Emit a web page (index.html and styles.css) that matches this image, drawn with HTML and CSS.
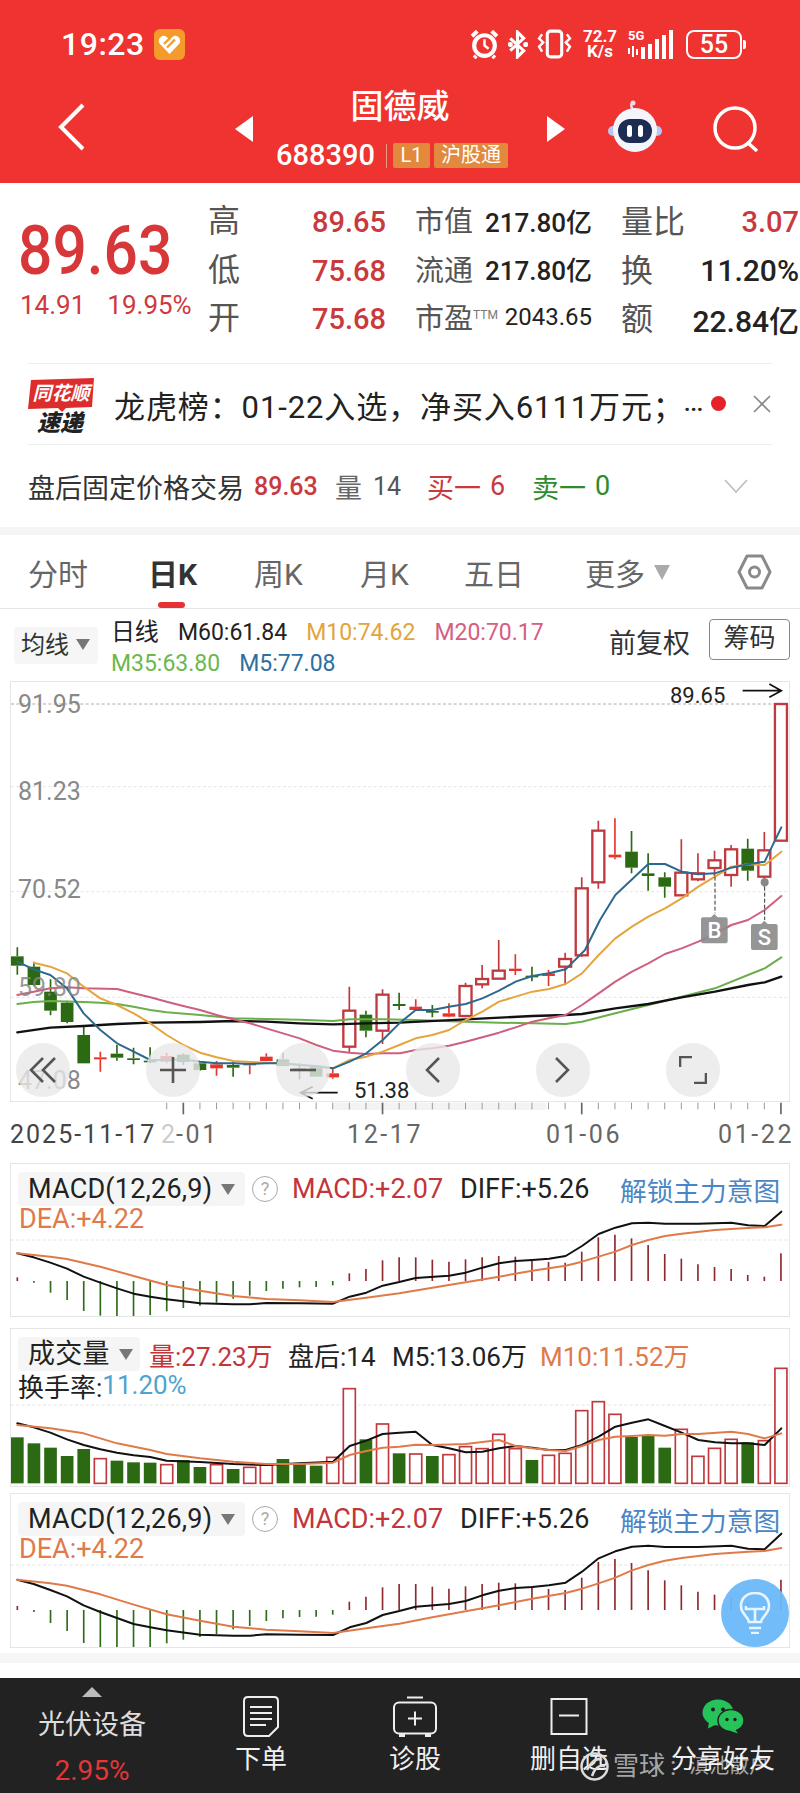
FILE: index.html
```html
<!DOCTYPE html>
<html lang="zh-CN">
<head>
    <meta charset="UTF-8">
    <meta name="viewport" content="width=device-width, initial-scale=1.0">
    <title>固德威 688390</title>
    <link rel="stylesheet" href="styles.css">
</head>
<body>
    <header class="top">
        <!-- status bar -->
        <div class="status">
            <span class="clock">19:23</span>
            <svg class="heart-app" viewBox="0 0 31 31">
                <rect width="31" height="31" rx="6" fill="#f59b2b"/>
                <path d="M15.5 25 L5.5 14.5 C3 10 8 5 12 7.5 L15.5 10.5 L19 7.5 C23 5 28 10 25.5 14.5 Z" fill="#fff"/>
                <path d="M10 15 L16 9 M13 18.5 L21 10.5" stroke="#f59b2b" stroke-width="2.4"/>
            </svg>
            <div class="status-right">
                <svg width="29" height="30" viewBox="0 0 28 29" fill="none" stroke="#fff">
                    <circle cx="14" cy="16" r="10" stroke-width="4"/>
                    <path d="M14 10 V16 L18 19" stroke-width="2.4"/>
                    <path d="M2 7 L7 2 M26 7 L21 2 M6 26 L4 28 M22 26 L24 28" stroke-width="3.8"/>
                </svg>
                <svg width="20" height="29" viewBox="0 0 19 28" fill="none" stroke="#fff" stroke-width="3">
                    <path d="M2 8 L15 20 L9 26 V2 L15 8 L2 20"/>
                    <circle cx="2" cy="14" r="1" fill="#fff"/><circle cx="17" cy="14" r="1" fill="#fff"/>
                </svg>
                <svg width="35" height="30" viewBox="0 0 34 29" fill="none" stroke="#fff" stroke-width="3">
                    <rect x="10" y="2" width="14" height="25" rx="3"/>
                    <path d="M5 5 L2 9 L6 13 L2 17 L5 22 M29 5 L32 9 L28 13 L32 17 L29 22" stroke-width="2.4"/>
                </svg>
                <span class="speed">72.7<br>K/s</span>
                <div class="signal">
                    <span class="five-g">5G</span>
                    <svg width="46" height="29" viewBox="0 0 46 29" fill="#fff">
                        <rect x="0" y="18" width="2" height="6"/><rect x="4" y="16" width="2" height="11"/>
                        <rect x="8" y="19" width="2" height="6"/><rect x="13" y="17" width="4" height="12"/>
                        <rect x="20" y="14" width="4" height="15"/><rect x="27" y="9" width="4" height="20"/>
                        <rect x="34" y="5" width="4" height="24"/><rect x="41" y="0" width="4" height="29"/>
                    </svg>
                </div>
                <div class="battery"><span>55</span></div>
            </div>
        </div>

        <!-- stock nav -->
        <nav class="nav">
            <svg class="back" width="27" height="48" viewBox="0 0 27 48" fill="none" stroke="#fff" stroke-width="4">
                <path d="M25 2 L3 24 L25 46"/>
            </svg>
            <span class="tri tri-left"></span>
            <div class="stock">
                <div class="stock-name">固德威</div>
                <div class="stock-code">
                    <span>688390</span>
                    <i class="sep"></i>
                    <b class="tag tag-l1">L1</b>
                    <b class="tag">沪股通</b>
                </div>
            </div>
            <span class="tri tri-right"></span>
            <svg class="robot" width="56" height="52" viewBox="0 0 56 52">
                <path d="M26 10 Q22 4 27 2" stroke="#e9e6f5" stroke-width="2.5" fill="none"/>
                <circle cx="26" cy="3" r="2.5" fill="#f2d9e0"/>
                <circle cx="6" cy="31" r="5" fill="#b6c8f2"/><circle cx="50" cy="31" r="5" fill="#b6c8f2"/>
                <circle cx="28" cy="30" r="22" fill="#f4f5fb"/>
                <rect x="11" y="19" width="34" height="24" rx="12" fill="#1c2c52"/>
                <rect x="20" y="25" width="5" height="12" rx="2.5" fill="#fff"/>
                <rect x="31" y="25" width="5" height="12" rx="2.5" fill="#fff"/>
            </svg>
            <svg class="search" width="47" height="46" viewBox="0 0 47 46" fill="none" stroke="#fff" stroke-width="3.5">
                <circle cx="22" cy="22" r="20"/>
                <path d="M34 36 L44 45"/>
            </svg>
        </nav>
    </header>

    <!-- quote -->
    <section class="quote">
        <div class="price-box">
            <div class="price">89.63</div>
            <div class="change"><span>14.91</span><span>19.95%</span></div>
        </div>
        <div class="quote-grid">
            <span class="q-label big">高</span><span class="q-num red">89.65</span>
            <div class="q-pair"><span class="q-label">市值</span><span class="q-val">217.80亿</span></div>
            <div class="q-pair wide"><span class="q-label">量比</span><span class="q-num red">3.07</span></div>

            <span class="q-label big">低</span><span class="q-num red">75.68</span>
            <div class="q-pair"><span class="q-label">流通</span><span class="q-val">217.80亿</span></div>
            <div class="q-pair wide"><span class="q-label">换</span><span class="q-num">11.20%</span></div>

            <span class="q-label big">开</span><span class="q-num red">75.68</span>
            <div class="q-pair"><span class="q-label">市盈<sup>TTM</sup></span><span class="q-val small">2043.65</span></div>
            <div class="q-pair wide"><span class="q-label">额</span><span class="q-num">22.84亿</span></div>
        </div>
    </section>

    <section class="news">
        <svg class="news-logo" width="66" height="56" viewBox="0 0 66 56">
            <path d="M3 2 L66 0 L64 29 L38 30 L34 34 L30 30 L0 31 Z" fill="#dd2c2c"/>
            <text x="33" y="22" class="logo-top">同花顺</text>
            <text x="32" y="53" class="logo-bottom">速递</text>
        </svg>
        <p class="news-text">龙虎榜：01-22入选，净买入6111万元；</p>
        <span class="news-more">...</span>
        <i class="dot"></i>
        <svg class="close" width="18" height="18" viewBox="0 0 18 18" stroke="#888" stroke-width="1.6">
            <path d="M1 1 L17 17 M17 1 L1 17"/>
        </svg>
    </section>

    <section class="after">
        <span class="after-title">盘后固定价格交易</span>
        <span class="after-price">89.63</span>
        <span class="after-vol">量</span><span class="after-vol-n">14</span>
        <span class="after-buy">买一</span><span class="after-buy-n">6</span>
        <span class="after-sell">卖一</span><span class="after-sell-n">0</span>
        <svg class="after-arrow" width="24" height="14" viewBox="0 0 24 14" fill="none" stroke="#bbb" stroke-width="1.5">
            <path d="M1 1 L12 13 L23 1"/>
        </svg>
    </section>

    <div class="band"></div>

    <!-- period tabs -->
    <div class="tabs">
        <span class="tab">分时</span>
        <span class="tab active">日K</span>
        <span class="tab">周K</span>
        <span class="tab">月K</span>
        <span class="tab">五日</span>
        <span class="tab">更多<i class="caret"></i></span>
        <svg class="hex" width="35" height="36" viewBox="0 0 35 36" fill="none" stroke="#8a8a8a" stroke-width="3">
            <path d="M10 2 H25 L33 18 L25 34 H10 L2 18 Z" stroke-linejoin="round"/>
            <circle cx="17.5" cy="18" r="5"/>
        </svg>
    </div>

    <div class="legend-bar">
        <div class="ma-select">均线<i class="caret dark"></i></div>
        <div class="legend">
            <div class="legend-row">
                <span class="ma-title">日线</span>
                <span>M60:61.84</span>
                <span class="c-m10">M10:74.62</span>
                <span class="c-m20">M20:70.17</span>
            </div>
            <div class="legend-row">
                <span class="c-m35">M35:63.80</span>
                <span class="c-m5">M5:77.08</span>
            </div>
        </div>
        <span class="fq">前复权</span>
        <span class="chip">筹码</span>
    </div>

    <!-- k line -->
    <section class="kline">
        <svg id="kline" class="fill" viewBox="33 6 2334 1257"></svg>
        <span class="y-label" style="top:11px">91.95</span>
        <span class="y-label" style="top:98px">81.23</span>
        <span class="y-label" style="top:196px">70.52</span>
        <span class="y-label faded" style="top:294px">59.80</span>
        <span class="y-label" style="top:387px">47.08</span>
        <span class="mark" style="top:2px;left:659px">89.65</span>
        <span class="mark" style="top:397px;left:343px">51.38</span>
        <div class="chart-btns">
            <span class="chart-btn"><svg width="28" height="26" viewBox="0 0 28 26" fill="none" stroke="#555" stroke-width="2.6"><path d="M14 1 L2 13 L14 25 M26 1 L14 13 L26 25"/></svg></span>
            <span class="chart-btn"><svg width="26" height="26" viewBox="0 0 26 26" stroke="#555" stroke-width="2.6"><path d="M0 13 H26 M13 0 V26"/></svg></span>
            <span class="chart-btn"><svg width="26" height="4" viewBox="0 0 26 4" stroke="#555" stroke-width="2.6"><path d="M0 2 H26"/></svg></span>
            <span class="chart-btn"><svg width="15" height="26" viewBox="0 0 15 26" fill="none" stroke="#555" stroke-width="2.6"><path d="M14 1 L2 13 L14 25"/></svg></span>
            <span class="chart-btn"><svg width="15" height="26" viewBox="0 0 15 26" fill="none" stroke="#555" stroke-width="2.6"><path d="M1 1 L13 13 L1 25"/></svg></span>
            <span class="chart-btn"><svg width="28" height="28" viewBox="0 0 28 28" fill="none" stroke="#555" stroke-width="2.6"><path d="M1 11 V1 H13 M27 17 V27 H15"/></svg></span>
        </div>
    </section>

    <div class="x-axis">
        <svg id="ticks" class="ticks" width="800" height="14" viewBox="0 1266 2400 42"></svg>
        <span class="x-label dark" style="left:10px">2025-11-17</span>
        <span class="x-label pale" style="left:161px">2</span>
        <span class="x-label" style="left:176px">-01</span>
        <span class="x-label" style="left:347px">12-17</span>
        <span class="x-label" style="left:546px">01-06</span>
        <span class="x-label" style="left:718px">01-22</span>
    </div>

    <!-- macd -->
    <section class="panel panel-macd">
        <svg id="macd1" class="fill" viewBox="33 42 2334 456"></svg>
        <div class="panel-head">
            <span class="pill pill-macd">MACD(12,26,9)<i class="caret dark"></i></span>
            <span class="help">?</span>
            <span class="red-t macd-v">MACD:+2.07</span>
            <span class="diff">DIFF:+5.26</span>
            <span class="unlock">解锁主力意图</span>
        </div>
        <div class="dea">DEA:+4.22</div>
    </section>

    <!-- volume -->
    <section class="panel panel-vol">
        <svg id="vol" class="fill" viewBox="33 537 2334 471"></svg>
        <div class="panel-head">
            <span class="pill pill-vol">成交量<i class="caret dark"></i></span>
            <span class="red-t vol-v">量:27.23万</span>
            <span class="vol-after">盘后:14</span>
            <span class="vol-m5">M5:13.06万</span>
            <span class="vol-m10">M10:11.52万</span>
        </div>
        <div class="turnover">换手率:<span>11.20%</span></div>
    </section>

    <section class="panel panel-macd second">
        <svg id="macd2" class="fill" viewBox="33 45 2334 459"></svg>
        <div class="panel-head">
            <span class="pill pill-macd">MACD(12,26,9)<i class="caret dark"></i></span>
            <span class="help">?</span>
            <span class="red-t macd-v">MACD:+2.07</span>
            <span class="diff">DIFF:+5.26</span>
            <span class="unlock">解锁主力意图</span>
        </div>
        <div class="dea">DEA:+4.22</div>
        <span class="bulb">
            <svg width="32" height="42" viewBox="0 0 32 42" fill="none" stroke="#e8f4ff" stroke-width="2.6">
                <path d="M10 30 C9 24 2 22 2 14 C2 6 8 1 16 1 C24 1 30 6 30 14 C30 22 23 24 22 30 Z"/>
                <path d="M7 14 V17 H25 V14 M16 17 V30 M10 36 H22 M12 41 H20"/>
            </svg>
        </span>
    </section>

    <div class="band low"></div>

    <!-- bottom bar -->
    <footer class="foot">
        <div class="foot-item sector">
            <i class="up"></i>
            <span class="sector-name">光伏设备</span>
            <span class="sector-pct">2.95%</span>
        </div>
        <div class="foot-item">
            <svg class="foot-icon" width="36" height="41" viewBox="0 0 36 41" fill="none" stroke="#eee" stroke-width="2">
                <path d="M5 1 H31 Q35 1 35 5 V31 L26 40 H5 Q1 40 1 36 V5 Q1 1 5 1 Z"/>
                <path d="M7 11 H29 M7 17 H29 M7 23 H29 M7 29 H23"/>
            </svg>
            <span>下单</span>
        </div>
        <div class="foot-item">
            <svg class="foot-icon" width="44" height="40" viewBox="0 0 44 40" fill="none" stroke="#eee" stroke-width="2">
                <path d="M14 1 H30"/>
                <rect x="1" y="6" width="42" height="31" rx="5"/>
                <path d="M22 15 V29 M15 22 H29"/>
                <path d="M6 39 H12 M32 39 H38" stroke-width="3"/>
            </svg>
            <span>诊股</span>
        </div>
        <div class="foot-item">
            <svg class="foot-icon" width="38" height="38" viewBox="0 0 38 38" fill="none" stroke="#eee" stroke-width="2">
                <rect x="1.5" y="1.5" width="35" height="35"/>
                <path d="M9 18 H29"/>
            </svg>
            <span>删自选</span>
        </div>
        <div class="foot-item">
            <svg class="foot-icon" width="42" height="34" viewBox="0 0 42 34">
                <ellipse cx="16" cy="13" rx="15.5" ry="13" fill="#25c35a"/>
                <path d="M7 22 L6 29 L14 25 Z" fill="#25c35a"/>
                <ellipse cx="29" cy="21" rx="13" ry="11" fill="#25c35a" stroke="#222" stroke-width="1.5"/>
                <path d="M33 30 L36 34 L27 31 Z" fill="#25c35a"/>
                <circle cx="11" cy="10" r="2" fill="#222"/><circle cx="21" cy="10" r="2" fill="#222"/>
                <circle cx="25" cy="20" r="1.7" fill="#222"/><circle cx="33" cy="20" r="1.7" fill="#222"/>
            </svg>
            <span>分享好友</span>
        </div>
        <div class="watermark">
            <svg width="29" height="29" viewBox="0 0 29 29" fill="none" stroke="#dcdcdc" stroke-width="2.5">
                <circle cx="14.5" cy="14.5" r="13"/>
                <path d="M7 18 Q14 4 22 8 M12 24 Q16 12 25 14"/>
            </svg>
            <span>雪球</span><span class="wm-colon">:</span><span class="wm-name">滇池散户</span>
        </div>
    </footer>

    <script src="chart.js"></script>
</body>
</html>
```

FILE: styles.css
```css
* {
    box-sizing: border-box;
}
body {
    margin: 0;
    width: 800px;
    height: 1793px;
    overflow: hidden;
    background: #fff;
    color: #222;
    font-family: Roboto, "Noto Sans CJK SC", sans-serif;
}
p {
    margin: 0;
}
i {
    font-style: normal;
}

/* red header */
.top {
    height: 183px;
    background: #ee3330;
    color: #fff;
}
.status {
    height: 88px;
    padding: 0 58px 0 61px;
    display: flex;
    align-items: center;
}
.clock {
    font-size: 32px;
    font-weight: 500;
    letter-spacing: 0.5px;
}
.heart-app {
    width: 31px;
    height: 31px;
    margin-left: 9px;
}
.status-right {
    margin-left: auto;
    display: flex;
    align-items: center;
    gap: 9px;
}
.speed {
    font-size: 17px;
    line-height: 15px;
    font-weight: 700;
    text-align: center;
    width: 38px;
}
.signal {
    position: relative;
    width: 46px;
    height: 29px;
}
.five-g {
    position: absolute;
    left: 0;
    top: -2px;
    font-size: 13px;
    font-weight: 700;
}
.battery {
    width: 56px;
    height: 29px;
    margin-left: 3px;
    border: 2px solid #fff;
    border-radius: 8px;
    position: relative;
    text-align: center;
    font-size: 25px;
    line-height: 25px;
    font-weight: 500;
}
.battery::after {
    content: "";
    position: absolute;
    right: -6px;
    top: 8px;
    width: 3px;
    height: 9px;
    background: #fff;
    border-radius: 0 2px 2px 0;
}
.nav {
    height: 95px;
    display: flex;
    align-items: flex-start;
    padding-left: 58px;
}
.back {
    margin-top: 15px;
}
.tri {
    width: 0;
    height: 0;
    margin-top: 28px;
    border-top: 13px solid transparent;
    border-bottom: 13px solid transparent;
}
.tri-left {
    margin-left: 150px;
    border-right: 18px solid #fff;
}
.tri-right {
    border-left: 18px solid #fff;
}
.stock {
    width: 294px;
    margin-top: -1px;
    text-align: center;
}
.stock-name {
    font-size: 33px;
    line-height: 40px;
    font-weight: 500;
}
.stock-code {
    margin-top: 16px;
    padding-left: 23px;
    display: flex;
    align-items: center;
    font-size: 29px;
    line-height: 25px;
    font-weight: 500;
}
.sep {
    width: 1px;
    height: 24px;
    margin: 0 6px 0 11px;
    background: #e99a80;
}
.tag {
    height: 25px;
    padding: 0 7px;
    margin-right: 4px;
    background: #e2893d;
    border-radius: 2px;
    font-size: 20px;
    line-height: 25px;
    font-weight: 400;
}
.tag-l1 {
    width: 37px;
    padding: 0 6px;
}
.robot {
    margin: 12px 0 0 42px;
}
.search {
    margin: 18px 0 0 50px;
}

/* quote block */
.quote {
    height: 180px;
    display: flex;
    padding: 15px 1px 0 18px;
}
.price-box {
    width: 191px;
    flex: none;
}
.price {
    margin-top: 18px;
    font-size: 68px;
    line-height: 70px;
    font-weight: 500;
    color: #d8373a;
    transform-origin: left;
    transform: scaleX(0.89);
}
.change {
    margin-top: 4px;
    margin-left: 2px;
    font-size: 26px;
    line-height: 30px;
    color: #d0393c;
    display: flex;
    gap: 22px;
    white-space: nowrap;
}
.quote-grid {
    flex: 1;
    display: grid;
    grid-template-columns: 60px 117px 206px 207px;
    grid-auto-rows: 48.5px;
    align-items: center;
}
.q-pair {
    margin-left: 29px;
    display: flex;
    justify-content: space-between;
    align-items: center;
}
.q-label {
    margin-bottom: 6px;
    font-size: 29px;
    color: #555;
    white-space: nowrap;
}
.q-label.big {
    margin-bottom: 8px;
    margin-left: -1px;
    font-size: 32px;
}
.q-pair.wide .q-label {
    font-size: 32px;
}
.q-label sup {
    font-size: 12px;
    line-height: 0;
    color: #777;
    vertical-align: 10px;
}
.q-num {
    font-size: 29px;
    font-weight: 500;
    text-align: right;
    color: #222;
    white-space: nowrap;
}
.q-pair.wide .q-num {
    font-size: 30px;
}
.q-num.red,
.q-pair.wide .q-num.red {
    font-size: 29px;
    color: #c9393d;
}
.q-val {
    margin-bottom: 4px;
    font-size: 26px;
    font-weight: 500;
    white-space: nowrap;
    color: #222;
}
.q-val.small {
    font-size: 24px;
    font-weight: 400;
}

/* news and after hours rows */
.news {
    height: 82px;
    margin: 0 28px;
    border-top: 1px solid #eee;
    border-bottom: 1px solid #eee;
    display: flex;
    align-items: center;
}
.news-logo {
    flex: none;
    margin-top: 3px;
    overflow: visible;
}
.logo-top {
    fill: #fff;
    font-size: 19px;
    font-weight: 700;
    font-style: italic;
    text-anchor: middle;
}
.logo-bottom {
    fill: #222;
    font-size: 23px;
    font-weight: 900;
    font-style: italic;
    text-anchor: middle;
}
.news-text {
    margin-left: 20px;
    width: 570px;
    font-size: 31px;
    letter-spacing: 0.9px;
    color: #222;
    white-space: nowrap;
}
.news-more {
    width: 20px;
    font-size: 22px;
    line-height: 30px;
    font-weight: 700;
}
.dot {
    width: 15px;
    height: 15px;
    margin-left: 7px;
    margin-bottom: 2px;
    border-radius: 50%;
    background: #e3222a;
}
.close {
    margin-left: 27px;
    flex: none;
}
.after {
    height: 82px;
    padding: 0 28px;
    display: flex;
    align-items: center;
    font-size: 27px;
    white-space: nowrap;
}
.after-title {
    width: 226px;
    color: #333;
}
.after-price {
    width: 81px;
    font-size: 25px;
    font-weight: 500;
    color: #c9393d;
}
.after-vol {
    width: 38px;
    color: #666;
}
.after-vol-n {
    width: 54px;
    font-size: 25px;
    color: #555;
}
.after-buy,
.after-buy-n {
    color: #c9393d;
}
.after-buy {
    width: 63px;
}
.after-buy-n {
    width: 42px;
}
.after-sell,
.after-sell-n {
    color: #2e8b2e;
}
.after-sell {
    width: 63px;
}
.after-arrow {
    margin-left: auto;
    margin-right: 24px;
}
.band {
    height: 8px;
    background: #f5f5f5;
}

/* tabs */
.tabs {
    height: 74px;
    padding: 0 0 0 28px;
    display: grid;
    grid-template-columns: 120px 106px 106px 104px 121px 152px 35px;
    align-items: center;
    border-bottom: 1px solid #e6e6e6;
    font-size: 30px;
    color: #666;
}
.tab {
    white-space: nowrap;
}
.tab.active {
    position: relative;
    font-weight: 700;
    color: #333;
}
.tab.active::after {
    content: "";
    position: absolute;
    left: 10px;
    bottom: -14px;
    width: 27px;
    height: 6px;
    border-radius: 3px;
    background: #e53235;
}
.caret {
    display: inline-block;
    width: 0;
    height: 0;
    margin-left: 9px;
    vertical-align: 5px;
    border-left: 8px solid transparent;
    border-right: 8px solid transparent;
    border-top: 15px solid #aaa;
}
.caret.dark {
    border-left-width: 7px;
    border-right-width: 7px;
    border-top: 11px solid #777;
    vertical-align: 3px;
}

/* MA legend */
.legend-bar {
    height: 72px;
    padding: 8px 10px 0 14px;
    display: flex;
    font-size: 23px;
    white-space: nowrap;
}
.ma-select {
    width: 84px;
    height: 37px;
    margin-top: 10px;
    padding-left: 7px;
    background: #f6f6f6;
    border-radius: 4px;
    font-size: 24px;
    line-height: 37px;
    color: #333;
}
.ma-select .caret {
    margin-left: 7px;
}
.legend {
    margin-left: 13px;
    width: 499px;
}
.legend-row {
    display: flex;
    gap: 19px;
    height: 31px;
    line-height: 31px;
}
.ma-title {
    font-size: 24px;
}
.c-m10 {
    color: #e2a53d;
}
.c-m20 {
    color: #d4607f;
}
.c-m35 {
    color: #6bb84d;
}
.c-m5 {
    color: #2f6f9f;
}
.fq {
    font-size: 27px;
    margin-top: 5px;
    color: #333;
}
.chip {
    width: 81px;
    height: 41px;
    margin: 2px 0 0 19px;
    border: 1.5px solid #888;
    border-radius: 4px;
    font-size: 26px;
    line-height: 37px;
    text-align: center;
    color: #333;
}

/* chart boxes */
.kline,
.panel {
    position: relative;
    margin: 0 10px;
    border: 1px solid #e6e6e6;
}
.fill {
    position: absolute;
    left: 0;
    top: 0;
    width: 100%;
    height: 100%;
}
.kline {
    height: 421px;
}
.y-label {
    position: absolute;
    left: 7px;
    font-size: 25px;
    line-height: 24px;
    color: #888;
}
.y-label.faded {
    color: rgba(136, 136, 136, 0.85);
}
.mark {
    position: absolute;
    font-size: 22px;
    line-height: 24px;
    color: #222;
}
.chart-btns {
    position: absolute;
    left: 5px;
    top: 361px;
    display: flex;
    gap: 76.5px;
}
.chart-btn {
    width: 53.5px;
    height: 53.5px;
    border-radius: 50%;
    background: rgba(232, 232, 232, 0.8);
    display: flex;
    align-items: center;
    justify-content: center;
}
.x-axis {
    position: relative;
    height: 61px;
}
.ticks {
    display: block;
}
.x-label {
    position: absolute;
    top: 19px;
    font-size: 25px;
    line-height: 28px;
    letter-spacing: 2.6px;
    color: #666;
}
.x-label.dark {
    letter-spacing: 2px;
    color: #444;
}
.x-label.pale {
    color: #ccc;
}

.panel-head,
.dea,
.turnover {
    position: relative;
    display: flex;
    align-items: center;
    white-space: nowrap;
    font-size: 26px;
}
.panel-macd {
    height: 154px;
}
.panel-vol {
    height: 159px;
    margin-top: 11px;
}
.panel-macd.second {
    height: 155px;
    margin-top: 6px;
}
.panel-head {
    height: 34px;
    margin: 8px 0 0 7px;
}
.pill {
    height: 34px;
    padding-left: 10px;
    background: rgba(244, 244, 244, 0.9);
    border-radius: 4px;
    font-size: 27px;
    letter-spacing: 0.2px;
    line-height: 34px;
    color: #222;
}
.pill-macd {
    width: 227px;
}
.pill-vol {
    width: 122px;
}
.help {
    width: 26px;
    height: 26px;
    margin-left: 7px;
    border: 1.5px solid #aaa;
    border-radius: 50%;
    font-size: 18px;
    line-height: 23px;
    text-align: center;
    color: #aaa;
}
.red-t {
    color: #c2353a;
}
.macd-v {
    margin-left: 14px;
    width: 168px;
    font-size: 27px;
}
.diff {
    width: 160px;
    font-size: 27px;
}
.unlock {
    color: #4a86c5;
    font-size: 26.7px;
}
.vol-v {
    margin-left: 9px;
    width: 139px;
}
.vol-after {
    width: 104px;
}
.vol-m5 {
    width: 148px;
}
.vol-m10 {
    color: #e07a4a;
}
.dea {
    margin: 0 0 0 8px;
    height: 26px;
    font-size: 27px;
    color: #e07a4a;
}
.turnover {
    margin: 0 0 0 7px;
    height: 28px;
    color: #222;
}
.turnover span {
    color: #4fa3cf;
}
.bulb {
    position: absolute;
    right: 0;
    bottom: 0;
    width: 68px;
    height: 68px;
    border-radius: 50%;
    background: rgba(108, 184, 250, 0.95);
    display: flex;
    align-items: center;
    justify-content: center;
}
.band.low {
    height: 10px;
    margin-top: 5px;
    background: #f6f6f6;
}

/* footer */
.foot {
    position: relative;
    height: 115px;
    margin-top: 15px;
    background: #222;
    color: #f0f0f0;
    display: grid;
    grid-template-columns: 184px repeat(4, 154px);
    font-size: 26px;
}
.foot-item {
    display: flex;
    flex-direction: column;
    align-items: center;
    white-space: nowrap;
}
.foot-icon {
    height: 41px;
    margin-top: 18px;
    flex: none;
}
.foot-item > span {
    margin-top: 3px;
    line-height: 38px;
}
.up {
    margin-top: 9px;
    width: 0;
    height: 0;
    border-left: 10px solid transparent;
    border-right: 10px solid transparent;
    border-bottom: 10px solid #bbb;
}
.foot-item > .sector-name {
    margin-top: 9px;
    line-height: 38px;
    font-size: 27px;
    color: #ddd;
}
.foot-item > .sector-pct {
    margin-top: 11px;
    line-height: 32px;
    font-size: 28px;
    color: #e53535;
}
.watermark {
    position: absolute;
    left: 580px;
    top: 73px;
    display: flex;
    align-items: center;
    font-size: 26px;
    color: rgba(255, 255, 255, 0.62);
}
.watermark span {
    line-height: 30px;
}
.watermark span:first-of-type {
    margin-left: 4px;
}
.wm-colon {
    margin-left: 5px;
}
.wm-name {
    margin-left: 13px;
    font-size: 20px;
}
```

FILE: chart.js
```js
// coordinates are in 1/3 px, one candle every 49.8 units
const STEP = 49.8;
const X0 = 52;
const BAR_RED = "#c0393e";
const BAR_GREEN = "#2b6a12";
const SOLID_RED = "#e5352d";

function xAt(i) {
    return X0 + STEP * i;
}

function linePath(points, color, width) {
    return `<polyline points="${points}" fill="none" stroke="${color}" stroke-width="${width}" stroke-linejoin="round" stroke-linecap="round"/>`;
}

function rect(x, y, w, h, style) {
    return `<rect x="${x}" y="${y}" width="${w}" height="${h}" ${style}/>`;
}

// type, wick top, body top, body bottom, wick bottom
// h = hollow red, r = solid red, g = green
const candles = [
    ["g",802,829,857,884],["g",845,860,915,918],["g",898,935,992,1006],["g",962,968,1026,1030],
    ["g",1040,1065,1150,1150],["r",1115,1132,1138,1175],["g",1095,1121,1133,1142],["g",1103,1135,1138,1153],
    ["g",1102,1142,1146,1150],["r",1118,1128,1145,1150],["g",1120,1124,1146,1155],["g",1148,1150,1170,1172],
    ["r",1143,1153,1165,1187],["g",1145,1155,1163,1190],["r",1145,1150,1156,1183],["r",1120,1130,1143,1143],
    ["g",1118,1138,1158,1158],["g",1150,1164,1168,1198],["g",1155,1160,1190,1190],["r",1165,1180,1192,1196],
    ["h",920,992,1100,1120],["g",992,1004,1052,1072],["h",928,944,1052,1092],["g",938,972,978,990],
    ["r",958,980,990,992],["g",975,993,996,1012],["r",970,1000,1010,1012],["h",908,918,1008,1012],
    ["h",855,897,913,925],["h",780,872,896,896],["r",823,866,873,885],["g",860,887,890,904],
    ["r",870,880,888,918],["h",818,837,860,915],["h",592,625,826,830],["h",422,452,607,626],
    ["r",415,524,532,538],["g",453,515,563,580],["g",520,580,588,632],["g",577,592,620,653],
    ["h",478,578,646,648],["h",520,580,598,604],["h",512,541,564,590],["h",495,508,585,620],
    ["g",476,506,572,602],["h",456,511,590,620],["h",72,72,482,482]
];

const MA5 = "52,845 101,868 151,885 201,925 251,1000 301,1050 351,1090 401,1115 451,1140 500,1140 550,1138 600,1145 650,1150 700,1150 750,1152 799,1150 849,1150 899,1155 949,1158 999,1165 1049,1145 1099,1120 1148,1080 1198,1030 1247,990 1297,990 1347,980 1397,972 1447,955 1497,932 1547,905 1597,888 1647,880 1697,868 1755,810 1800,720 1846,645 1945,552 1995,552 2045,575 2095,583 2145,580 2194,563 2244,553 2294,545 2344,442";
const MA10 = "101,848 151,860 201,880 251,920 301,955 351,975 401,1000 451,1030 500,1065 550,1095 600,1118 650,1132 700,1143 750,1146 799,1148 849,1150 999,1165 1049,1140 1099,1130 1148,1115 1198,1095 1247,1075 1297,1065 1347,1050 1397,1020 1447,995 1497,965 1547,950 1597,935 1647,927 1697,912 1746,880 1796,825 1846,775 1896,740 1945,710 1995,685 2045,655 2095,620 2145,590 2194,560 2244,553 2294,555 2344,515";
const MA20 = "52,945 101,935 151,925 201,922 251,925 351,927 401,940 451,952 500,965 550,978 600,990 650,1005 700,1018 750,1030 799,1045 849,1060 899,1075 949,1095 999,1112 1049,1118 1099,1122 1148,1120 1200,1120 1247,1110 1297,1105 1347,1097 1397,1085 1447,1072 1497,1058 1547,1042 1597,1025 1647,1015 1697,1005 1746,975 1796,940 1846,905 1896,875 1945,850 1995,822 2045,805 2095,785 2145,762 2194,735 2244,720 2294,690 2344,648";
const MA35 = "52,972 101,966 151,963 251,966 301,968 351,972 401,980 451,990 500,997 600,1005 700,1015 799,1017 899,1019 999,1023 1049,1018 1148,1018 1247,1020 1397,1025 1497,1028 1597,1030 1697,1032 1746,1025 1846,1000 1945,975 2045,950 2145,925 2244,885 2294,865 2344,832";
const MA60 = "52,1057 151,1043 251,1038 351,1032 451,1028 600,1026 700,1023 799,1025 899,1030 999,1033 1099,1030 1198,1028 1397,1018 1597,1008 1697,1005 1746,1002 1846,985 1945,972 2045,952 2145,935 2244,915 2294,907 2344,890";

function drawKline() {
    let out = "";
    // grid
    out += `<path d="M33 72 H2367" stroke="#aaa" stroke-width="3" stroke-dasharray="9 7"/>`;
    [320, 635, 952].forEach(function(y) {
        out += `<path d="M33 ${y} H2367" stroke="#e4e4e4" stroke-width="3" stroke-dasharray="9 7"/>`;
    });

    candles.forEach(function(c, i) {
        const x = xAt(i);
        const color = c[0] === "g" ? BAR_GREEN : (c[0] === "h" ? BAR_RED : SOLID_RED);
        out += `<path d="M${x} ${c[1]} V${c[2]} M${x} ${c[3]} V${c[4]}" stroke="${color}" stroke-width="5"/>`;
        if (c[0] === "h") {
            out += rect(x - 18, c[2], 36, c[3] - c[2], `fill="#fff" stroke="${color}" stroke-width="7"`);
        } else {
            const h = Math.max(c[3] - c[2], 5);
            out += rect(x - 19, c[2], 38, h, `fill="${color}"`);
        }
    });

    out += linePath(MA35, "#6bae4c", 6);
    out += linePath(MA60, "#111", 7);
    out += linePath(MA20, "#cf5f7d", 6);
    out += linePath(MA10, "#e4a53f", 6);
    out += linePath(MA5, "#2b6a8e", 6);

    // B / S markers
    out += `<path d="M2145 590 V700" stroke="#333" stroke-width="3" stroke-dasharray="12 6"/>`;
    out += `<path d="M2294 620 V720" stroke="#333" stroke-width="3" stroke-dasharray="12 6"/>`;
    out += `<circle cx="2294" cy="607" r="12" fill="#888"/>`;
    out += `<path d="M2103 718 Q2103 712 2109 712 H2133 L2143 702 L2153 712 H2177 Q2183 712 2183 718 V784 Q2183 790 2177 790 H2109 Q2103 790 2103 784 Z" fill="#8c8c8c" fill-opacity="0.92"/>`;
    out += `<path d="M2253 738 Q2253 732 2259 732 H2283 L2293 722 L2303 732 H2327 Q2333 732 2333 738 V804 Q2333 810 2327 810 H2259 Q2253 810 2253 804 Z" fill="#8c8c8c" fill-opacity="0.92"/>`;
    out += `<text x="2143" y="774" text-anchor="middle" font-size="66" font-family="Roboto" font-weight="500" fill="#fff">B</text>`;
    out += `<text x="2293" y="794" text-anchor="middle" font-size="66" font-family="Roboto" font-weight="500" fill="#fff">S</text>`;

    // high and low arrows
    out += `<path d="M2228 32 H2342 M2308 12 L2344 32 L2308 52" fill="none" stroke="#111" stroke-width="5"/>`;
    out += `<path d="M1013 1238 H902 M938 1220 L902 1238 L938 1256" fill="none" stroke="#111" stroke-width="5"/>`;

    document.getElementById("kline").innerHTML = out;
}

function drawTicks() {
    let out = `<rect x="1000" y="1268" width="640" height="22" fill="#f3f3f3"/>`;
    for (let i = 9; i < 47; i++) {
        const x = xAt(i);
        const major = [10, 22, 34, 46].indexOf(i) >= 0;
        out += `<path d="M${x} 1268 V${major ? 1303 : 1288}" stroke="${major ? "#666" : "#999"}" stroke-width="${major ? 5 : 3}"/>`;
    }
    document.getElementById("ticks").innerHTML = out;
}

// macd: bar top values, zero line at 393
const macdBars = [382,398,428,450,483,497,502,500,495,484,474,467,458,446,437,423,416,412,411,406,
    370,357,331,322,322,329,335,328,322,318,320,328,336,338,305,262,254,265,285,312,326,343,351,357,375,380,310];
const DIFF = "52,310 101,322 151,338 201,356 251,380 301,398 351,415 401,431 451,440 500,448 600,460 700,463 750,463 799,459 899,460 999,461 1049,440 1099,428 1148,407 1198,396 1247,384 1347,377 1397,368 1447,353 1497,340 1547,333 1597,330 1647,326 1697,318 1746,288 1796,252 1846,233 1896,220 1945,218 1995,221 2095,221 2194,218 2244,226 2294,228 2344,185";
const DEA = "52,310 151,320 201,327 301,350 401,378 500,405 600,422 700,438 799,447 899,451 999,456 1099,443 1198,430 1297,413 1397,397 1497,380 1597,362 1697,347 1746,335 1796,320 1846,305 1896,285 1945,270 1995,258 2045,251 2145,240 2244,234 2294,232 2344,224";

function drawMacd(id, scale) {
    function sy(y) {
        return Math.round(393 + (y - 393) * scale);
    }
    function scaled(points) {
        return points.split(" ").map(function(p) {
            const xy = p.split(",");
            return xy[0] + "," + sy(Number(xy[1]));
        }).join(" ");
    }
    let out = `<path d="M33 ${sy(270)} H2367" stroke="#e4e4e4" stroke-width="3" stroke-dasharray="9 7"/>`;
    macdBars.forEach(function(top, i) {
        const x = xAt(i);
        const up = top < 393;
        out += `<path d="M${x} ${up ? sy(top) : 393} V${up ? 393 : sy(top)}" stroke="${up ? "#8e2a2e" : "#2f6b1a"}" stroke-width="5"/>`;
    });
    out += linePath(scaled(DIFF), "#111", 6);
    out += linePath(scaled(DEA), "#e07a4a", 6);
    document.getElementById(id).innerHTML = out;
}

// volume: top of each bar, bottom at 1000
const volBars = [["g",862],["g",880],["g",893],["g",918],["g",897],["h",926],["g",932],["g",937],["g",938],["h",944],
    ["g",930],["g",951],["h",944],["g",957],["h",952],["h",945],["g",927],["g",943],["g",947],["h",922],
    ["h",716],["g",868],["h",822],["g",910],["h",912],["g",918],["h",914],["h",890],["h",896],["h",853],
    ["h",896],["g",930],["h",916],["h",910],["h",782],["h",755],["h",793],["g",861],["g",857],["g",893],
    ["h",838],["h",919],["h",895],["h",868],["g",877],["h",872],["h",655]];
const VOL_M5 = "52,820 101,832 151,848 201,868 251,885 301,898 351,908 401,916 451,921 500,932 600,936 700,942 799,945 899,940 999,935 1049,888 1099,872 1148,852 1198,848 1247,845 1297,885 1347,895 1397,907 1447,905 1497,895 1547,888 1597,893 1647,900 1697,900 1746,885 1796,860 1846,830 1896,818 1945,808 1995,828 2045,848 2095,870 2145,877 2194,880 2244,880 2294,885 2344,835";
const VOL_M10 = "52,825 151,835 251,850 351,880 451,900 500,912 600,925 700,935 799,942 899,942 999,938 1049,915 1099,903 1148,893 1198,890 1247,884 1297,885 1397,882 1497,870 1547,888 1597,895 1647,900 1697,903 1746,888 1796,870 1846,860 1896,858 1945,855 1995,857 2045,852 2095,852 2194,845 2244,852 2294,865 2344,850";

function drawVolume() {
    let out = `<path d="M33 765 H2367" stroke="#e4e4e4" stroke-width="3" stroke-dasharray="9 7"/>`;
    volBars.forEach(function(b, i) {
        const x = xAt(i);
        if (b[0] === "g") {
            out += rect(x - 19, b[1], 38, 1000 - b[1], `fill="${BAR_GREEN}"`);
        } else {
            out += rect(x - 18, b[1], 36, 1000 - b[1], `fill="#fff" stroke="${BAR_RED}" stroke-width="5"`);
        }
    });
    out += linePath(VOL_M5, "#111", 6);
    out += linePath(VOL_M10, "#e07a4a", 6);
    document.getElementById("vol").innerHTML = out;
}

drawKline();
drawTicks();
drawMacd("macd1", 1);
drawMacd("macd2", 1.1);
drawVolume();
```
